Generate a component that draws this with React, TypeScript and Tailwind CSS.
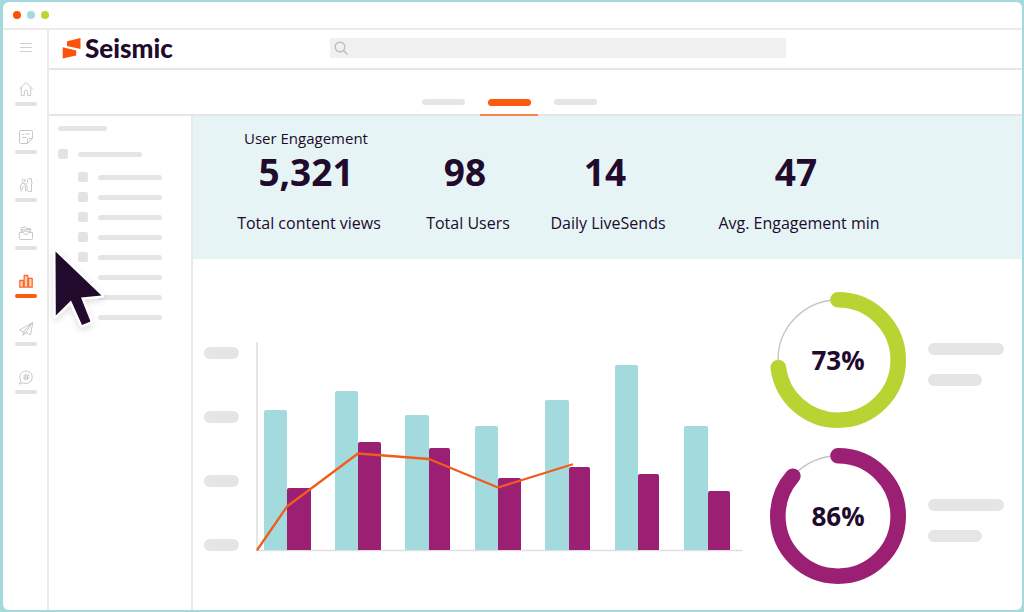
import type { ReactNode } from "react";

const teal = "#a3dade";
const purple = "#9b1f72";

function Glyph({ children }: { children: ReactNode }) {
  return (
    <svg
      viewBox="0 0 16 16"
      className="h-4 w-4"
      fill="none"
      stroke="currentColor"
      strokeWidth="1"
      strokeLinecap="round"
      strokeLinejoin="round"
      aria-hidden="true"
    >
      {children}
    </svg>
  );
}

const navItems: { name: string; active?: boolean; icon: ReactNode }[] = [
  {
    name: "Home",
    icon: (
      <path d="M1.5 8 8 1.5 14.5 8M3.3 6.6v8h3V11a1.7 1.7 0 0 1 3.4 0v3.6h3v-8" />
    ),
  },
  {
    name: "Notes",
    icon: (
      <>
        <path d="M2.500 1.500h11a1 1 0 0 1 1 1v7l-5 5h-7a1 1 0 0 1-1-1v-11a1 1 0 0 1 1-1Z" />
        <path d="M14.300 9.500h-3.800a1 1 0 0 0-1 1v3.800M4.500 5.500h1M7.500 5h4M4.500 8.500h3.500" />
      </>
    ),
  },
  {
    name: "People",
    icon: (
      <>
        <circle cx="5.500" cy="3.600" r="1.500" />
        <path d="M4.300 6.300 2 9.500M4.500 6.300h2.200l1 7.700M5.300 9.500 3 14.300M2.600 8.500v4M9.500 5V2.800l1.500-1.300h2.500v3.300l.7 1.200-.7 1.200v7.300h-3.300L9 13V9l-.8-1.500z" />
      </>
    ),
  },
  {
    name: "Library",
    icon: (
      <>
        <path d="M3.200 6.200V2.800l4.200-1 1 1.700h4v2.700M3.500 4.700h9.300M2.300 7.500l1.200-1.300h9l1.200 1.300" />
        <path d="M1.500 7.500h3.800c.3 1.400 1.300 2 2.700 2s2.400-.6 2.700-2h3.800v6a1 1 0 0 1-1 1h-11a1 1 0 0 1-1-1z" />
      </>
    ),
  },
  {
    name: "Analytics",
    active: true,
    icon: (
      <path
        d="M1.800 7.500h3.600v6.700H1.800zM6.200 2.500h3.600v11.700H6.200zM10.600 5.300h3.600v8.900h-3.600z"
        strokeWidth="1.300"
        fill="#fdd3bd"
      />
    ),
  },
  {
    name: "Send",
    icon: (
      <path d="M14.500 1.500 1.500 9l3.700 1.800 7 2.700zM14.500 1.500 5.200 10.800v3.700l2.400-2.700M7.600 11.800l6.900-10.300" />
    ),
  },
  {
    name: "Channels",
    icon: (
      <>
        <path d="M2.600 11.500A6.300 6.300 0 1 1 5 13.800L1.500 15z" />
        <path d="m7.600 5-.8 6M10 5l-.8 6M5.700 6.900h5.400M5.400 9.200h5.400" />
      </>
    ),
  },
];

const stats = [
  { title: "User Engagement", value: "5,321", label: "Total content views" },
  { title: "", value: "98", label: "Total Users" },
  { title: "", value: "14", label: "Daily LiveSends" },
  { title: "", value: "47", label: "Avg. Engagement min" },
];

const bars = [
  { x: 8, split: 31, end: 55, a: 140, b: 62 },
  { x: 79, split: 102, end: 125, a: 159, b: 108 },
  { x: 149, split: 173, end: 194, a: 135, b: 102 },
  { x: 219, split: 242, end: 265, a: 124, b: 72 },
  { x: 289, split: 313, end: 334, a: 150, b: 83 },
  { x: 359, split: 382, end: 403, a: 185, b: 76 },
  { x: 428, split: 452, end: 474, a: 124, b: 59 },
];

const barPath = (left: number, right: number, height: number) => {
  const top = 208 - height;
  return `M${left} 208V${top + 2}q0-2 2-2H${right - 2}q2 0 2 2V208z`;
};

function BarChart() {
  return (
    <svg viewBox="0 0 487 210" className="block w-full" role="img" aria-label="Engagement chart">
      <path d="M1 0v208.500h485.500" fill="none" stroke="#dededf" strokeWidth="1.500" />
      {bars.map((bar) => (
        <g key={bar.x}>
          <path d={barPath(bar.x, bar.split, bar.a)} fill={teal} />
          <path d={barPath(bar.split, bar.end, bar.b)} fill={purple} />
        </g>
      ))}
      <path
        d="M1.500 207.500 31 164.500 102 111.500l71 5.500 69 28.500 74-23"
        fill="none"
        stroke="#f25c19"
        strokeWidth="2.300"
        strokeLinecap="round"
        strokeLinejoin="round"
      />
    </svg>
  );
}

function Donut({ value, sweep, color }: { value: number; sweep: number; color: string }) {
  return (
    <div className="flex items-center gap-[22px]">
      <div className="grid h-[136px] w-[136px] shrink-0 place-items-center">
        <svg viewBox="0 0 136 136" className="col-start-1 row-start-1 h-full w-full" aria-hidden="true">
          <circle cx="68" cy="68" r="60" fill="none" stroke="#c4c4c8" strokeWidth="1.300" />
          <circle
            cx="68"
            cy="68"
            r="60.200"
            fill="none"
            stroke={color}
            strokeWidth="15.600"
            strokeLinecap="round"
            pathLength="100"
            strokeDasharray={`${sweep} 100`}
            transform="rotate(-90 68 68)"
          />
        </svg>
        <span className="col-start-1 row-start-1 text-[26px] leading-8 font-bold">{value}%</span>
      </div>
      <div className="flex flex-col gap-[19px] pt-2">
        <div className="h-3 w-[76px] rounded-full bg-[#e5e5e5]" />
        <div className="h-3 w-[54px] rounded-full bg-[#e5e5e5]" />
      </div>
    </div>
  );
}

export default function App() {
  return (
    <div className="flex min-h-screen bg-[#a4d9de] pt-0.5 pr-0.5 pb-0.5 pl-[3px] font-['Open_Sans',sans-serif] text-[#210a2b]">
      <div className="flex flex-1 flex-col overflow-hidden rounded-md bg-white">
        <div className="flex h-7 items-center gap-1.5 border-b-2 border-[#ebebec] pl-2.5">
          <span className="h-2 w-2 rounded-full bg-[#fb5108]" />
          <span className="h-2 w-2 rounded-full bg-[#a4d9de]" />
          <span className="h-2 w-2 rounded-full bg-[#b9d536]" />
        </div>

        <div className="flex flex-1">
          <nav className="flex w-[46px] shrink-0 flex-col items-center border-r-2 border-[#ebebec] pt-[9px] pl-0.5 text-[#c9c9ca]">
            <button type="button" aria-label="Menu" className="flex h-4 w-3 flex-col justify-center gap-[3px]">
              <span className="h-px w-full bg-[#d0d0d0]" />
              <span className="h-px w-full bg-[#d0d0d0]" />
              <span className="h-px w-full bg-[#d0d0d0]" />
            </button>
            <ul className="mt-[26px] flex flex-col gap-[23px]">
              {navItems.map((item) => (
                <li key={item.name}>
                  <a
                    href="#"
                    aria-label={item.name}
                    className={
                      item.active
                        ? "flex flex-col items-center gap-[5px] text-[#fb6a2c]"
                        : "flex flex-col items-center gap-[5px]"
                    }
                  >
                    <Glyph>{item.icon}</Glyph>
                    <span
                      className={
                        item.active
                          ? "h-1 w-[22px] rounded-full bg-[#fb5a0f]"
                          : "h-1 w-[22px] rounded-full bg-[#e2e2e2]"
                      }
                    />
                  </a>
                </li>
              ))}
            </ul>
          </nav>

          <div className="flex min-w-0 flex-1 flex-col">
            <header className="flex h-10 items-center border-b-2 border-[#e6e6e7] pb-0.5 pl-[13px]">
              <a href="#" aria-label="Seismic" className="flex w-[268px] shrink-0 items-center gap-1">
                <svg viewBox="0 0 19 22" className="h-[22px] w-[19px]" fill="#fb5108" aria-hidden="true">
                  <path d="M5 4.200 18.500 1v11L5 9zM.7 10.300 14.200 13.500v5L.7 21.500z" />
                </svg>
                <span className="font-['Lato',sans-serif] text-[26px] leading-7 font-black">Seismic</span>
              </a>
              <label className="flex h-5 w-[47.5%] items-center gap-2 bg-[#f0f0f0] pl-1">
                <svg viewBox="0 0 14 14" className="h-3.5 w-3.5 shrink-0" fill="none" stroke="#bdbdbd" strokeWidth="1.400" aria-hidden="true">
                  <circle cx="6" cy="6" r="4.800" />
                  <path d="m9.500 9.500 3.500 3.500" strokeLinecap="round" />
                </svg>
                <input type="search" aria-label="Search" className="min-w-0 flex-1 bg-transparent text-xs outline-none" />
              </label>
            </header>

            <div role="tablist" className="flex h-[46px] items-end gap-2 border-b-2 border-[#e6e6e9] pl-[365px]">
              <button type="button" role="tab" aria-label="First" className="flex h-5 w-[58px] justify-center pt-[5px]">
                <span className="h-1.5 w-[43px] rounded-full bg-[#e5e5e5]" />
              </button>
              <button type="button" role="tab" aria-selected="true" aria-label="Second" className="-mb-0.5 flex h-[22px] w-[58px] justify-center border-b-2 border-[#f5854f] pt-[5px]">
                <span className="h-[7px] w-[43px] rounded-full bg-[#fb5a0f]" />
              </button>
              <button type="button" role="tab" aria-label="Third" className="flex h-5 w-[58px] justify-center pt-[5px]">
                <span className="h-1.5 w-[43px] rounded-full bg-[#e5e5e5]" />
              </button>
            </div>

            <div className="flex flex-1">
              <aside className="w-36 shrink-0 border-r-2 border-[#e9e9ea] pt-2.5 pl-[9px]">
                <div className="h-[5px] w-[49px] rounded-full bg-[#e5e5e5]" />
                <div className="mt-[18px] flex items-center gap-2.5">
                  <span className="h-2.5 w-2.5 rounded-xs bg-[#e3e3e3]" />
                  <span className="h-[5px] w-16 rounded-full bg-[#e5e5e5]" />
                </div>
                <ul className="mt-[13px] flex flex-col gap-2.5 pl-5">
                  {[0, 1, 2, 3, 4, 5, 6, 7].map((row) => (
                    <li key={row} className="flex h-2.5 items-center gap-2.5">
                      <span className={row < 5 ? "h-2.5 w-2.5 rounded-xs bg-[#e3e3e3]" : "h-2.5 w-2.5"} />
                      <span className="h-[5px] w-16 rounded-full bg-[#e5e5e5]" />
                    </li>
                  ))}
                </ul>
              </aside>

              <main className="flex min-w-0 flex-1 flex-col">
                <section className="grid h-[143px] grid-cols-[160fr_158fr_122fr_260fr_93fr] bg-[#e6f4f6] pt-3 pl-9 text-center whitespace-nowrap">
                  {stats.map((stat) => (
                    <div key={stat.label} className="flex flex-col items-center">
                      <h2 className="h-5 pr-1.5 text-[15px] leading-5 font-medium">{stat.title}</h2>
                      <p className="pr-1.5 text-[37px] leading-[48px] font-bold">{stat.value}</p>
                      <p className="mt-[15px] text-base leading-6 font-medium">{stat.label}</p>
                    </div>
                  ))}
                </section>

                <section className="flex flex-1 items-start pt-[33px] pl-[11px]">
                  <div className="mt-[55px] flex flex-col gap-[52px]">
                    {[0, 1, 2, 3].map((tick) => (
                      <div key={tick} className="h-3 w-[35px] rounded-full bg-[#e5e5e5]" />
                    ))}
                  </div>
                  <div className="mt-[50px] ml-[17px] min-w-0 flex-1">
                    <BarChart />
                  </div>
                  <div className="mr-[18px] ml-[27px] flex flex-col gap-5">
                    <Donut value={73} sweep={73} color="#b7d433" />
                    <Donut value={86} sweep={86.5} color={purple} />
                  </div>
                </section>
              </main>
            </div>
          </div>
        </div>
      </div>

      <svg
        viewBox="0 0 60 86"
        className="pointer-events-none absolute top-[245px] left-[50px] h-[86px] w-[60px] drop-shadow-md"
        aria-hidden="true"
      >
        <path
          d="M5.500 6.500 51.500 50.500 31 52.500 40.500 76.500 32 80 21 55.500 5.800 70.500z"
          fill="#210a2b"
          stroke="#fff"
          strokeWidth="5"
          strokeLinejoin="round"
          paintOrder="stroke"
        />
      </svg>
    </div>
  );
}
